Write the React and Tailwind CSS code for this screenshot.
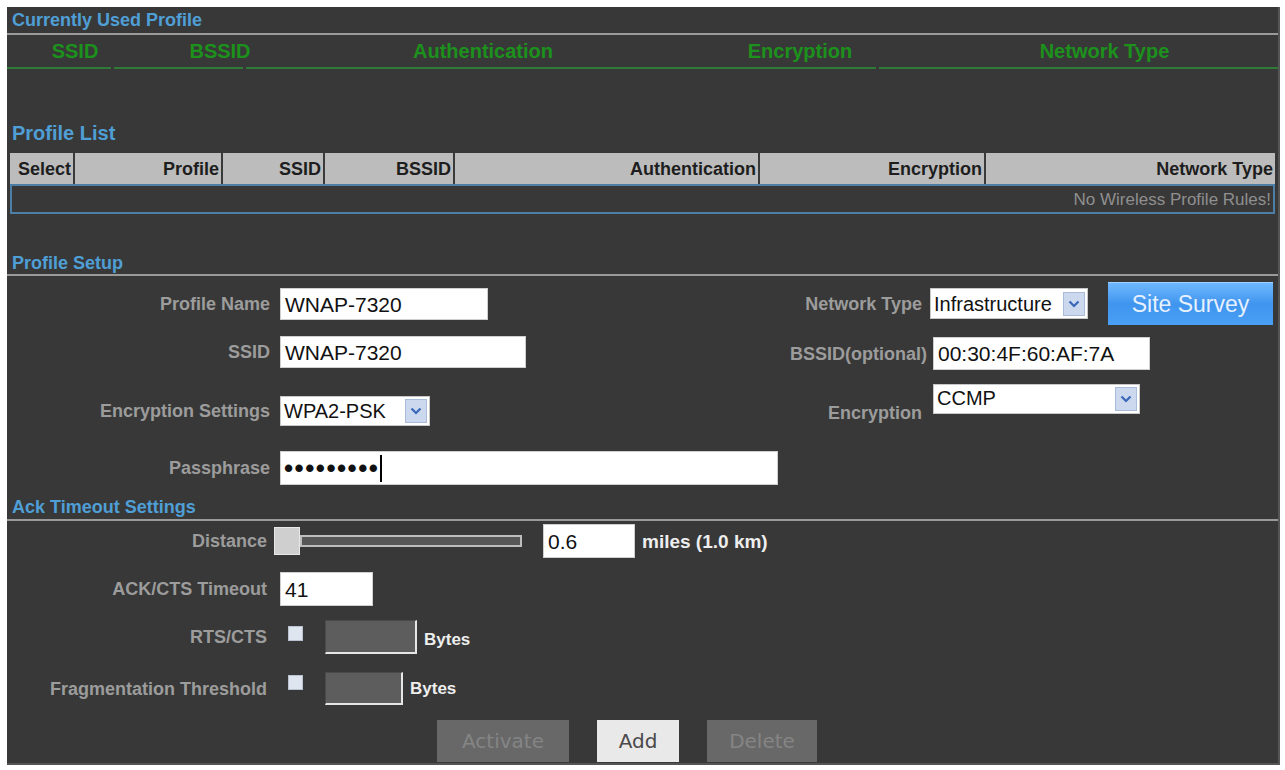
import React from 'react';

const font = { fontFamily: '"Liberation Sans", Arial, sans-serif' };

const Chevron = () => (
  <span className="flex h-[24px] w-[22px] items-center justify-center bg-[#cbd8ee] border border-[#a9bbd8]">
    <svg width="12" height="8" viewBox="0 0 12 8">
      <path d="M1.5 1.5 L6 6 L10.5 1.5" fill="none" stroke="#3a67b8" strokeWidth="2.2" />
    </svg>
  </span>
);

const Select = ({ value, className, top }) => (
  <div className={`flex justify-between bg-white border border-[#c8c8c8] pl-[3px] pr-[2px] ${top ? 'items-start pt-[2px]' : 'items-center'} ${className}`}>
    <span className={`text-[20px] leading-none text-[#111] ${top ? 'pt-[1px]' : ''}`}>{value}</span>
    <Chevron />
  </div>
);

const TextBox = ({ value, className }) => (
  <div className={`flex items-center bg-white border border-[#cfcfcf] pl-[4px] text-[21px] leading-none text-[#111] ${className}`}>
    {value}
  </div>
);

const Label = ({ children, className = '' }) => (
  <span className={`text-[18px] font-bold text-[#9c9c9c] text-right leading-none ${className}`}>{children}</span>
);

const Checkbox = () => (
  <span className="h-[15px] w-[15px] bg-[#dfe5ee] border border-[#b8c2d0]" />
);

const GrayBox = ({ className }) => (
  <span className={`bg-[#5d5d5d] border-t border-l border-[#4a4a4a] border-b-2 border-r-2 border-b-[#e6e6e6] border-r-[#e6e6e6] ${className}`} />
);

export default function App() {
  const cols = [
    ['Select', 'w-[63px]'],
    ['Profile', 'w-[146px]'],
    ['SSID', 'w-[100px]'],
    ['BSSID', 'w-[128px]'],
    ['Authentication', 'w-[303px]'],
    ['Encryption', 'w-[224px]'],
    ['Network Type', 'flex-1'],
  ];

  return (
    <div className="w-[1285px] h-[770px] bg-white p-[7px] pr-[5px] pb-[5px]" style={font}>
      <div className="h-[758px] w-[1273px] bg-[#383838] flex flex-col border-r-2 border-b-2 border-[#555]">
        {/* Currently used profile */}
        <div className="h-[26px] flex items-end pb-[4px]">
          <span className="pl-[5px] text-[18px] font-bold text-[#4f9fd6] leading-none">Currently Used Profile</span>
        </div>
        <div className="h-[2px] bg-[#9a9a9a]" />
        <div className="h-[32px] flex items-center text-[20px] font-bold text-[#1c911c] leading-none">
          <span className="w-[136px] text-center">SSID</span>
          <span className="w-[154px] text-center">BSSID</span>
          <span className="w-[372px] text-center">Authentication</span>
          <span className="w-[262px] text-center">Encryption</span>
          <span className="flex-1 text-center">Network Type</span>
        </div>
        <div className="h-[2px] flex gap-[3px]">
          <span className="w-[104px] bg-[#2f7a36]" />
          <span className="w-[129px] bg-[#2f7a36]" />
          <span className="w-[630px] bg-[#2f7a36]" />
          <span className="flex-1 bg-[#2f7a36]" />
        </div>

        {/* Profile list */}
        <div className="mt-[51px] h-[25px] flex items-center">
          <span className="pl-[5px] text-[20px] font-bold text-[#4f9fd6] leading-none">Profile List</span>
        </div>
        <div className="mt-[8px] mx-[3px] flex gap-[2px] bg-[#3a3a3a] h-[31px]">
          {cols.map(([t, w]) => (
            <div key={t} className={`${w} bg-[#bcbcbc] flex items-center justify-end pr-[2px] text-[18px] font-bold text-[#1e1e1e] leading-none`}>
              {t}
            </div>
          ))}
        </div>
        <div className="mx-[3px] h-[30px] border-2 border-[#4d7fa6] flex items-center justify-end pr-[2px]">
          <span className="text-[17px] text-[#8f8f8f] leading-none">No Wireless Profile Rules!</span>
        </div>

        {/* Profile setup */}
        <div className="mt-[37px] h-[23px] flex items-center">
          <span className="pl-[5px] text-[18px] font-bold text-[#4f9fd6] leading-none">Profile Setup</span>
        </div>
        <div className="h-[2px] bg-[#9a9a9a]" />
        <div className="flex">
          <div className="w-[783px] flex flex-col">
            <div className="mt-[12px] h-[32px] flex items-center gap-[10px]">
              <Label className="w-[263px]">Profile Name</Label>
              <TextBox value="WNAP-7320" className="w-[208px] h-[32px]" />
            </div>
            <div className="mt-[16px] h-[32px] flex items-center gap-[10px]">
              <Label className="w-[263px]">SSID</Label>
              <TextBox value="WNAP-7320" className="w-[246px] h-[32px]" />
            </div>
            <div className="mt-[28px] h-[30px] flex items-center gap-[10px]">
              <Label className="w-[263px]">Encryption Settings</Label>
              <Select value="WPA2-PSK" className="w-[150px] h-[30px]" />
            </div>
            <div className="mt-[25px] h-[34px] flex items-center gap-[10px]">
              <Label className="w-[263px]">Passphrase</Label>
              <div className="w-[498px] h-[34px] bg-white border border-[#cfcfcf] flex items-center pl-[3px]">
                <span className="text-[26px] font-bold text-[#111] leading-none tracking-[1.5px]">•••••••••</span>
                <span className="ml-[1px] w-[2px] h-[27px] bg-black" />
              </div>
            </div>
          </div>
          <div className="flex-1 flex flex-col">
            <div className="mt-[6px] h-[43px] flex items-center">
              <Label className="w-[132px]">Network Type</Label>
              <Select value="Infrastructure" className="ml-[8px] w-[158px] h-[31px]" />
              <div className="ml-[20px] w-[165px] h-[43px] flex items-center justify-center bg-gradient-to-b from-[#6fb8ff] via-[#3f95ee] to-[#4aa0f4] border-t border-[#9fd0ff]">
                <span className="text-[23px] text-[#e6f0ff] leading-none">Site Survey</span>
              </div>
            </div>
            <div className="mt-[12px] h-[33px] flex items-center">
              <Label className="w-[130px]">BSSID(optional)</Label>
              <TextBox value="00:30:4F:60:AF:7A" className="ml-[13px] w-[217px] h-[33px]" />
            </div>
            <div className="mt-[14px] h-[36px] flex items-start">
              <Label className="w-[132px] mt-[20px]">Encryption</Label>
              <Select value="CCMP" top className="ml-[11px] w-[207px] h-[30px]" />
            </div>
          </div>
        </div>

        {/* Ack timeout */}
        <div className="mt-[7px] h-[27px] flex items-end pb-[3px]">
          <span className="pl-[5px] text-[18px] font-bold text-[#4f9fd6] leading-none">Ack Timeout Settings</span>
        </div>
        <div className="h-[2px] bg-[#9a9a9a]" />
        <div className="mt-[3px] h-[34px] flex items-center">
          <Label className="w-[260px]">Distance</Label>
          <div className="ml-[7px] flex items-center">
            <span className="w-[26px] h-[28px] bg-[#cfcfcf] border border-[#e8e8e8]" />
            <span className="w-[222px] h-[12px] bg-[#575757] border-2 border-[#bdbdbd]" />
          </div>
          <TextBox value="0.6" className="ml-[21px] w-[92px] h-[34px]" />
          <span className="ml-[7px] text-[19px] font-bold text-[#eeeeee] leading-none">miles (1.0 km)</span>
        </div>
        <div className="mt-[14px] h-[34px] flex items-center">
          <Label className="w-[260px]">ACK/CTS Timeout</Label>
          <TextBox value="41" className="ml-[13px] w-[93px] h-[34px]" />
        </div>
        <div className="mt-[14px] h-[34px] flex items-center">
          <Label className="w-[260px]">RTS/CTS</Label>
          <span className="ml-[21px] self-start mt-[6px] flex"><Checkbox /></span>
          <GrayBox className="ml-[22px] w-[92px] h-[34px]" />
          <span className="ml-[7px] mt-[4px] text-[17px] font-bold text-[#eeeeee] leading-none">Bytes</span>
        </div>
        <div className="mt-[18px] h-[33px] flex items-center">
          <Label className="w-[260px]">Fragmentation Threshold</Label>
          <span className="ml-[21px] self-start mt-[3px] flex"><Checkbox /></span>
          <GrayBox className="ml-[22px] w-[78px] h-[33px]" />
          <span className="ml-[7px] text-[17px] font-bold text-[#eeeeee] leading-none">Bytes</span>
        </div>
        <div className="mt-[15px] h-[42px] flex gap-[28px] pl-[430px]" style={{ fontFamily: '"DejaVu Sans", Verdana, sans-serif' }}>
          <button className="w-[132px] h-[42px] bg-[#686868] text-[20px] text-[#858585]">Activate</button>
          <button className="w-[82px] h-[42px] bg-[#e9e9e9] text-[20px] text-[#4a4a4a]">Add</button>
          <button className="w-[110px] h-[42px] bg-[#686868] text-[20px] text-[#858585]">Delete</button>
        </div>
      </div>
    </div>
  );
}
